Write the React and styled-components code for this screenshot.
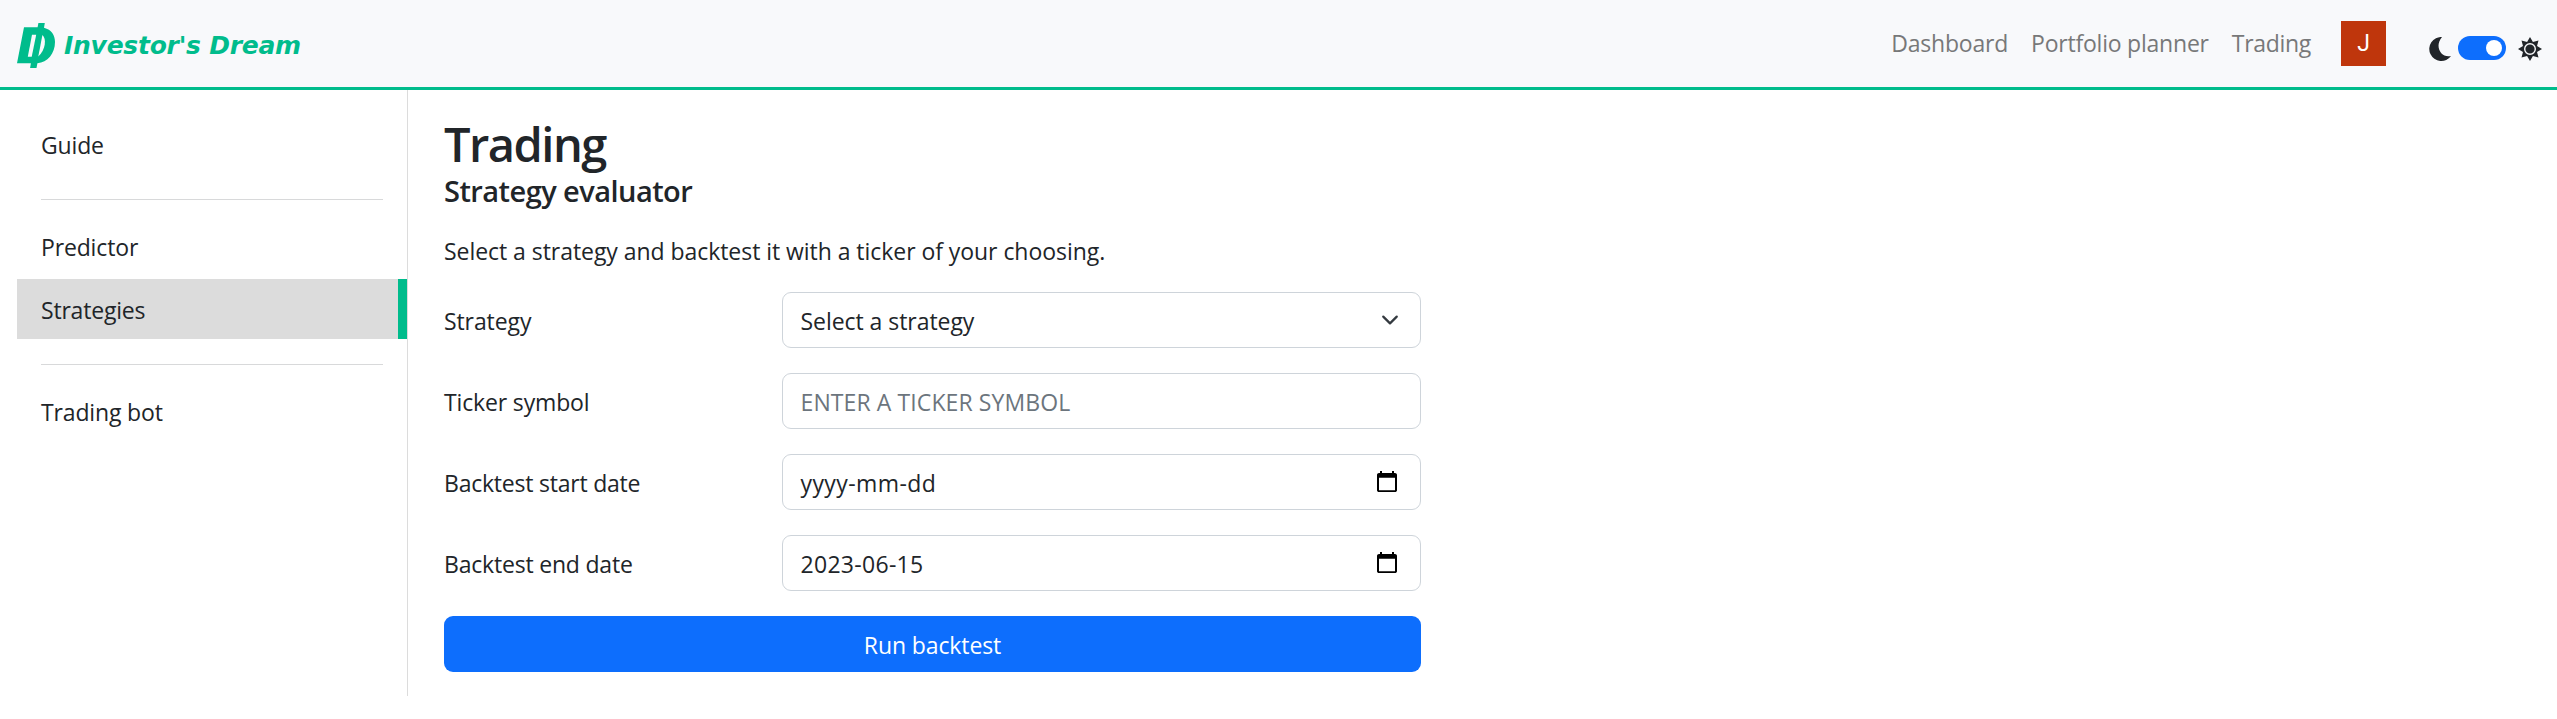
import React from "react";
import styled, { createGlobalStyle } from "styled-components";

const GREEN = "#00bc8c";
const INK = "#212529";
const BAR = "#f8f9fb";

const GlobalStyle = createGlobalStyle`
  *, *::before, *::after { box-sizing: border-box; }
  body {
    margin: 0;
    background: #fff;
    color: ${INK};
    font: 400 23px/36px "Open Sans", "Noto Sans", sans-serif;
  }
  h1, h2, p { margin: 0; }
`;

const Text = styled.span`
  letter-spacing: ${(p) => p.$track || 0}px;
  white-space: nowrap;
`;

const Header = styled.header`
  display: flex;
  align-items: flex-start;
  justify-content: space-between;
  height: 90px;
  padding: 0 15px 0 17px;
  background: ${BAR};
  border-bottom: 3px solid ${GREEN};
`;

const Brand = styled.a`
  display: flex;
  padding-top: 23px;
  gap: 9px;
  color: ${GREEN};
  font: italic bold 25px/46px "DejaVu Sans", sans-serif;
  letter-spacing: -0.25px;
`;

const HeaderEnd = styled.div`
  display: flex;
  align-items: flex-start;
`;

const Nav = styled.nav`
  display: flex;
  gap: 23px;
  padding-top: 25px;
  margin-right: 30px;
  color: #777879;
`;

const Avatar = styled.div`
  display: flex;
  justify-content: center;
  width: 45px;
  height: 45px;
  margin: 21px 43px 0 0;
  padding-top: 5px;
  background: #bf360c;
  color: #fff;
  font-family: Roboto, sans-serif;
`;

const ThemeSwitch = styled.div`
  display: flex;
  align-items: flex-start;
  padding-top: 36px;
  svg { display: block; margin-top: 1px; }
`;

const Toggle = styled.div`
  display: flex;
  justify-content: flex-end;
  align-items: center;
  width: 48px;
  height: 24px;
  margin: 0 12px 0 7px;
  padding-right: 4px;
  border-radius: 12px;
  background: #0d6efd;
`;

const Knob = styled.div`
  width: 16.5px;
  height: 16.5px;
  border-radius: 50%;
  background: #fff;
`;

const Body = styled.div`
  display: flex;
  align-items: flex-start;
`;

const Sidebar = styled.aside`
  width: 391px;
  height: 606px;
  margin-left: 17px;
  padding-top: 24px;
  border-right: 1px solid #dcdcdc;
`;

const SideLink = styled.div`
  height: 60px;
  padding: 13px 24px 11px;
  margin-top: ${(p) => (p.$active ? 3 : 0)}px;
  background: ${(p) => (p.$active ? "#dcdcdc" : "transparent")};
  border-right: 9px solid ${(p) => (p.$active ? GREEN : "transparent")};
`;

const Divider = styled.div`
  height: 1px;
  margin: 25px 24px 16px;
  background: #d8d9da;
`;

const Main = styled.main`
  width: 977px;
  margin-left: 36px;
  padding-top: 25px;
`;

const Title = styled.h1`
  font-size: 47px;
  font-weight: 600;
  line-height: 59px;
  height: 58px;
  letter-spacing: -1.5px;
`;

const Subtitle = styled.h2`
  font-size: 29px;
  font-weight: 600;
  line-height: 36px;
  letter-spacing: -0.55px;
`;

const Lead = styled.p`
  margin: 24px 0 23px;
`;

const Form = styled.div`
  display: grid;
  gap: 25px;
`;

const Row = styled.div`
  display: grid;
  grid-template-columns: 338px 1fr;
  height: 56px;
`;

const Label = styled.label`
  padding-top: 11px;
`;

const Field = styled.div`
  display: flex;
  justify-content: space-between;
  padding: 10px 18px 0 17.5px;
  border: 1px solid #ced4da;
  border-radius: 9px;
  color: ${(p) => (p.$placeholder ? "#6c757d" : INK)};
`;

const ChevronSlot = styled.span`
  display: flex;
  width: 24px;
  height: 34px;
  align-items: center;
  justify-content: center;
`;

const CalendarSlot = styled.span`
  display: flex;
  padding: 5px 3px 0 0;
`;

const Submit = styled.button`
  height: 56px;
  padding: 2px 0 0;
  border: 0;
  border-radius: 9px;
  background: #0d6efd;
  color: #fff;
  font: inherit;
`;

const Logo = () => (
  <svg width="38" height="45" viewBox="0 0 38 45">
    <path
      fill={GREEN}
      d="M7 4.3H20.6L21.4 0H27.8L27 4.8C34.5 6.8 38 12.3 38 19C38 30.5 30.5 39.5 20.4 40.3L19.5 45H13.1L13.9 40.3H0Z"
    />
    <path fill={BAR} d="M15 11.7H19.2L14.7 33.7H10.8Z" />
    <path fill={BAR} d="M25.4 12C29.6 15.5 28.8 26.5 21.3 33.6Z" />
  </svg>
);

const Moon = () => (
  <svg width="22" height="24" viewBox="0 0 22 24">
    <path fill={INK} d="M13 0A12 12 0 1 0 22 19C12 21.5 5 9.5 13 0Z" />
  </svg>
);

const rays = Array.from({ length: 16 }, (_, i) => {
  const a = (i * Math.PI) / 8;
  const r = i % 2 ? 7.6 : 12;
  return `${(12 + r * Math.sin(a)).toFixed(2)},${(12 - r * Math.cos(a)).toFixed(2)}`;
}).join(" ");

const Sun = () => (
  <svg width="24" height="24" viewBox="0 0 24 24">
    <polygon fill={INK} points={rays} />
    <circle cx="12" cy="12" r="5.3" fill={INK} stroke={BAR} strokeWidth="1.4" />
  </svg>
);

const Chevron = () => (
  <svg width="18" height="18" viewBox="0 0 16 16">
    <path d="m2 5 6 6 6-6" fill="none" stroke="#343a40" strokeWidth="2" strokeLinecap="round" strokeLinejoin="round" />
  </svg>
);

const Calendar = () => (
  <svg width="24" height="23" viewBox="0 0 24 24" preserveAspectRatio="none">
    <path d="M20 3h-1V1h-2v2H7V1H5v2H4c-1.1 0-2 .9-2 2v16c0 1.1.9 2 2 2h16c1.1 0 2-.9 2-2V5c0-1.1-.9-2-2-2zm0 18H4V8h16v13z" />
  </svg>
);

export default function App() {
  return (
    <>
      <GlobalStyle />
      <Header>
        <Brand><Logo />Investor's Dream</Brand>
        <HeaderEnd>
          <Nav>
            <Text $track={-0.22}>Dashboard</Text>
            <Text $track={-0.22}>Portfolio planner</Text>
            <Text $track={-0.3}>Trading</Text>
          </Nav>
          <Avatar>J</Avatar>
          <ThemeSwitch>
            <Moon />
            <Toggle><Knob /></Toggle>
            <Sun />
          </ThemeSwitch>
        </HeaderEnd>
      </Header>
      <Body>
        <Sidebar>
          <SideLink><Text $track={-0.15}>Guide</Text></SideLink>
          <Divider />
          <SideLink><Text $track={-0.15}>Predictor</Text></SideLink>
          <SideLink $active><Text $track={-0.2}>Strategies</Text></SideLink>
          <Divider />
          <SideLink><Text $track={-0.15}>Trading bot</Text></SideLink>
        </Sidebar>
        <Main>
          <Title>Trading</Title>
          <Subtitle>Strategy evaluator</Subtitle>
          <Lead><Text $track={-0.05}>Select a strategy and backtest it with a ticker of your choosing.</Text></Lead>
          <Form>
            <Row>
              <Label><Text $track={-0.1}>Strategy</Text></Label>
              <Field>
                <Text $track={-0.05}>Select a strategy</Text>
                <ChevronSlot><Chevron /></ChevronSlot>
              </Field>
            </Row>
            <Row>
              <Label><Text $track={-0.15}>Ticker symbol</Text></Label>
              <Field $placeholder><Text $track={0.1}>ENTER A TICKER SYMBOL</Text></Field>
            </Row>
            <Row>
              <Label><Text $track={-0.22}>Backtest start date</Text></Label>
              <Field>
                <Text $track={0.4}>yyyy-mm-dd</Text>
                <CalendarSlot><Calendar /></CalendarSlot>
              </Field>
            </Row>
            <Row>
              <Label><Text $track={-0.2}>Backtest end date</Text></Label>
              <Field>
                <Text $track={0.3}>2023-06-15</Text>
                <CalendarSlot><Calendar /></CalendarSlot>
              </Field>
            </Row>
            <Submit><Text $track={-0.1}>Run backtest</Text></Submit>
          </Form>
        </Main>
      </Body>
    </>
  );
}
